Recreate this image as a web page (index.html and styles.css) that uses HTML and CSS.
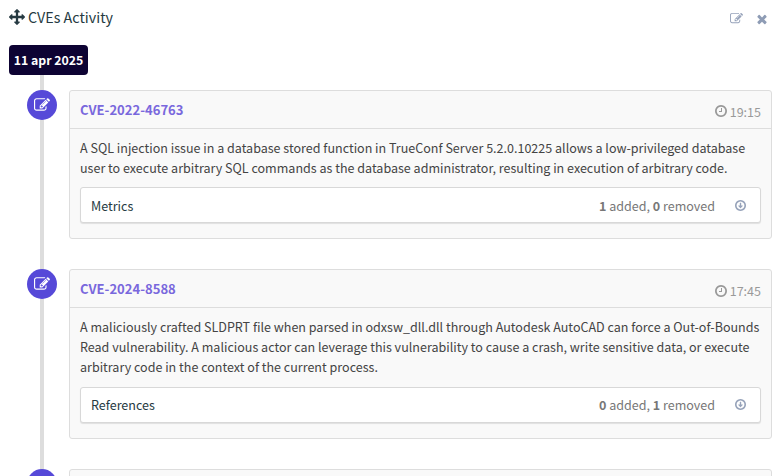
FILE: index.html
```html
<!DOCTYPE html>
<html lang="en">
<head>
<meta charset="utf-8">
<title>CVEs Activity</title>
<link rel="stylesheet" href="styles.css">
</head>
<body>
<svg class="defs" aria-hidden="true">
  <symbol id="move" viewBox="0 0 1792 1792"><path d="M1792 896q0 26-19 45l-256 256q-19 19-45 19t-45-19-19-45v-128h-384v384h128q26 0 45 19t19 45-19 45l-256 256q-19 19-45 19t-45-19l-256-256q-19-19-19-45t19-45 45-19h128v-384h-384v128q0 26-19 45t-45 19-45-19l-256-256q-19-19-19-45t19-45l256-256q19-19 45-19t45 19 19 45v128h384v-384h-128q-26 0-45-19t-19-45 19-45l256-256q19-19 45-19t45 19l256 256q19 19 19 45t-19 45-45 19h-128v384h384v-128q0-26 19-45t45-19 45 19l256 256q19 19 19 45z"/></symbol>
  <symbol id="edit" viewBox="0 0 1792 1792"><path d="M888 1184l116-116-152-152-116 116v56h96v96h56zm440-720q-16-16-33 1l-350 350q-17 17-1 33t33-1l350-350q17-17 1-33zm80 594v190q0 119-84.5 203.5t-203.5 84.5h-832q-119 0-203.5-84.5t-84.5-203.5v-832q0-119 84.5-203.5t203.5-84.5h832q63 0 117 25 15 7 18 23 3 17-9 29l-49 49q-14 14-32 8-23-6-45-6h-832q-66 0-113 47t-47 113v832q0 66 47 113t113 47h832q66 0 113-47t47-113v-126q0-13 9-22l64-64q15-15 35-7t20 29zm-96-738l288 288-672 672h-288v-288zm444 132l-92 92-288-288 92-92q28-28 68-28t68 28l152 152q28 28 28 68t-28 68z"/></symbol>
  <symbol id="close" viewBox="0 0 1792 1792"><path d="M1490 1322q0 40-28 68l-136 136q-28 28-68 28t-68-28l-294-294-294 294q-28 28-68 28t-68-28l-136-136q-28-28-28-68t28-68l294-294-294-294q-28-28-28-68t28-68l136-136q28-28 68-28t68 28l294 294 294-294q28-28 68-28t68 28l136 136q28 28 28 68t-28 68l-294 294 294 294q28 28 28 68z"/></symbol>
  <symbol id="clock" viewBox="128 128 1536 1536"><path d="M1024 544v448q0 14-9 23t-23 9h-320q-14 0-23-9t-9-23v-64q0-14 9-23t23-9h224v-352q0-14 9-23t23-9h64q14 0 23 9t9 23zm416 352q0-148-73-273t-198-198-273-73-273 73-198 198-73 273 73 273 198 198 273 73 273-73 198-198 73-273zm224 0q0 209-103 385.500t-279.500 279.500-385.500 103-385.500-103-279.500-279.500-103-385.500 103-385.500 279.500-279.500 385.500-103 385.500 103 279.500 279.500 103 385.500z"/></symbol>
  <symbol id="down" viewBox="128 128 1536 1536"><path d="M1216 928q0 14-10 24l-287 319q-10 9-23 9t-23-9l-287-319q-10-10-10-24 0-32 32-32h192v-352q0-32 32-32h128q32 0 32 32v352h192q32 0 32 32z"/><path d="M1440 896q0-148-73-273t-198-198-273-73-273 73-198 198-73 273 73 273 198 198 273 73 273-73 198-198 73-273zm224 0q0 209-103 385.500t-279.500 279.500-385.500 103-385.500-103-279.500-279.500-103-385.500 103-385.500 279.500-279.500 385.500-103 385.500 103 279.500 279.500 103 385.500z"/></symbol>
</svg>
<header class="titlebar">
  <svg class="icon-move"><use href="#move"/></svg>
  <h1>CVEs Activity</h1>
  <svg class="icon-edit"><use href="#edit"/></svg>
  <svg class="icon-close"><use href="#close"/></svg>
</header>
<main class="timeline">
  <div class="date">11 apr 2025</div>
  <article class="event">
    <div class="marker"><svg><use href="#edit"/></svg></div>
    <section class="card">
      <div class="card-head"><a class="cve">CVE-2022-46763</a><span class="time"><svg><use href="#clock"/></svg>19:15</span></div>
      <div class="card-body">
        <p>A SQL injection issue in a database stored function in TrueConf Server 5.2.0.10225 allows a low-privileged database<br>user to execute arbitrary SQL commands as the database administrator, resulting in execution of arbitrary code.</p>
        <div class="change"><span class="kind">Metrics</span><span class="count"><b>1</b> added, <b>0</b> removed</span><svg><use href="#down"/></svg></div>
      </div>
    </section>
  </article>
  <article class="event">
    <div class="marker"><svg><use href="#edit"/></svg></div>
    <section class="card">
      <div class="card-head"><a class="cve">CVE-2024-8588</a><span class="time"><svg><use href="#clock"/></svg>17:45</span></div>
      <div class="card-body">
        <p>A maliciously crafted SLDPRT file when parsed in odxsw_dll.dll through Autodesk AutoCAD can force a Out-of-Bounds<br>Read vulnerability. A malicious actor can leverage this vulnerability to cause a crash, write sensitive data, or execute<br>arbitrary code in the context of the current process.</p>
        <div class="change"><span class="kind">References</span><span class="count"><b>0</b> added, <b>1</b> removed</span><svg><use href="#down"/></svg></div>
      </div>
    </section>
  </article>
  <article class="event">
    <div class="marker"><svg><use href="#edit"/></svg></div>
    <section class="card"><div class="card-head"></div></section>
  </article>
</main>
</body>
</html>
```
FILE: styles.css
```css
* { box-sizing: border-box; }
html, body { height: 476px; overflow: hidden; }
body {
  margin: 0;
  background: #fff;
  color: #444;
  font: 12.54px/19.7px "Noto Sans CJK SC", "Open Sans", sans-serif;
}
svg { display: block; fill: currentColor; flex: none; }
.defs { display: none; }
.titlebar { display: flex; align-items: center; height: 35px; padding: 0 13px 1px 9px; color: #263a42; }
h1 { margin: 0 auto 0 3px; font-size: 14.3px; font-weight: 400; line-height: 20px; }
.icon-move { width: 16px; height: 16px; }
.icon-edit { width: 13px; height: 13px; color: #97a3ba; margin: 2px 12px 0 0; }
.icon-close { width: 14px; height: 14px; color: #8e9cb5; margin-top: 3px; }
.timeline {
  padding: 10px 10px 0 9px;
  background: linear-gradient(#ddd, #ddd) 40px 15px / 4px 100% no-repeat;
}
.date {
  width: 79px; height: 30px; margin-bottom: 15px;
  background: #0d0333; color: #fff; border-radius: 4px;
  font-size: 12.3px; font-weight: 700; line-height: 31px; text-align: center; white-space: nowrap;
}
.event { display: flex; align-items: flex-start; margin-bottom: 30px; }
.marker {
  display: flex; align-items: center; justify-content: center;
  width: 30px; height: 30px; margin: 0 12px 0 18px;
  border-radius: 50%; background: #5649d8; color: #fff; flex: none;
}
.marker svg { width: 16px; height: 16px; }
.card {
  flex: 1; min-width: 0;
  border: 1px solid #ddd; border-radius: 3px; background: #f9f9f9;
}
.card-head {
  display: flex; align-items: center; justify-content: space-between;
  height: 38px; padding: 0 10px; border-bottom: 1px solid #ddd;
}
.cve { color: #7968dd; font-size: 13.05px; font-weight: 700; }
.time { display: flex; align-items: center; gap: 3px; color: #999; margin-top: 4px; }
.time svg { width: 12px; height: 12px; }
.card-body { padding: 9px 10px 15px; }
p { margin: 0 0 10px; white-space: nowrap; }
.change {
  display: flex; align-items: center; height: 36px; padding: 0 14px 0 10px;
  background: #fff; border: 1px solid #d8d8d8; border-radius: 3px; box-shadow: 0 1px 1px rgba(0,0,0,.1);
}
.kind { color: #263a42; margin-right: auto; }
.count { color: #777; margin-right: 20px; }
.change svg { width: 11px; height: 11px; color: #97a3ba; }
```
